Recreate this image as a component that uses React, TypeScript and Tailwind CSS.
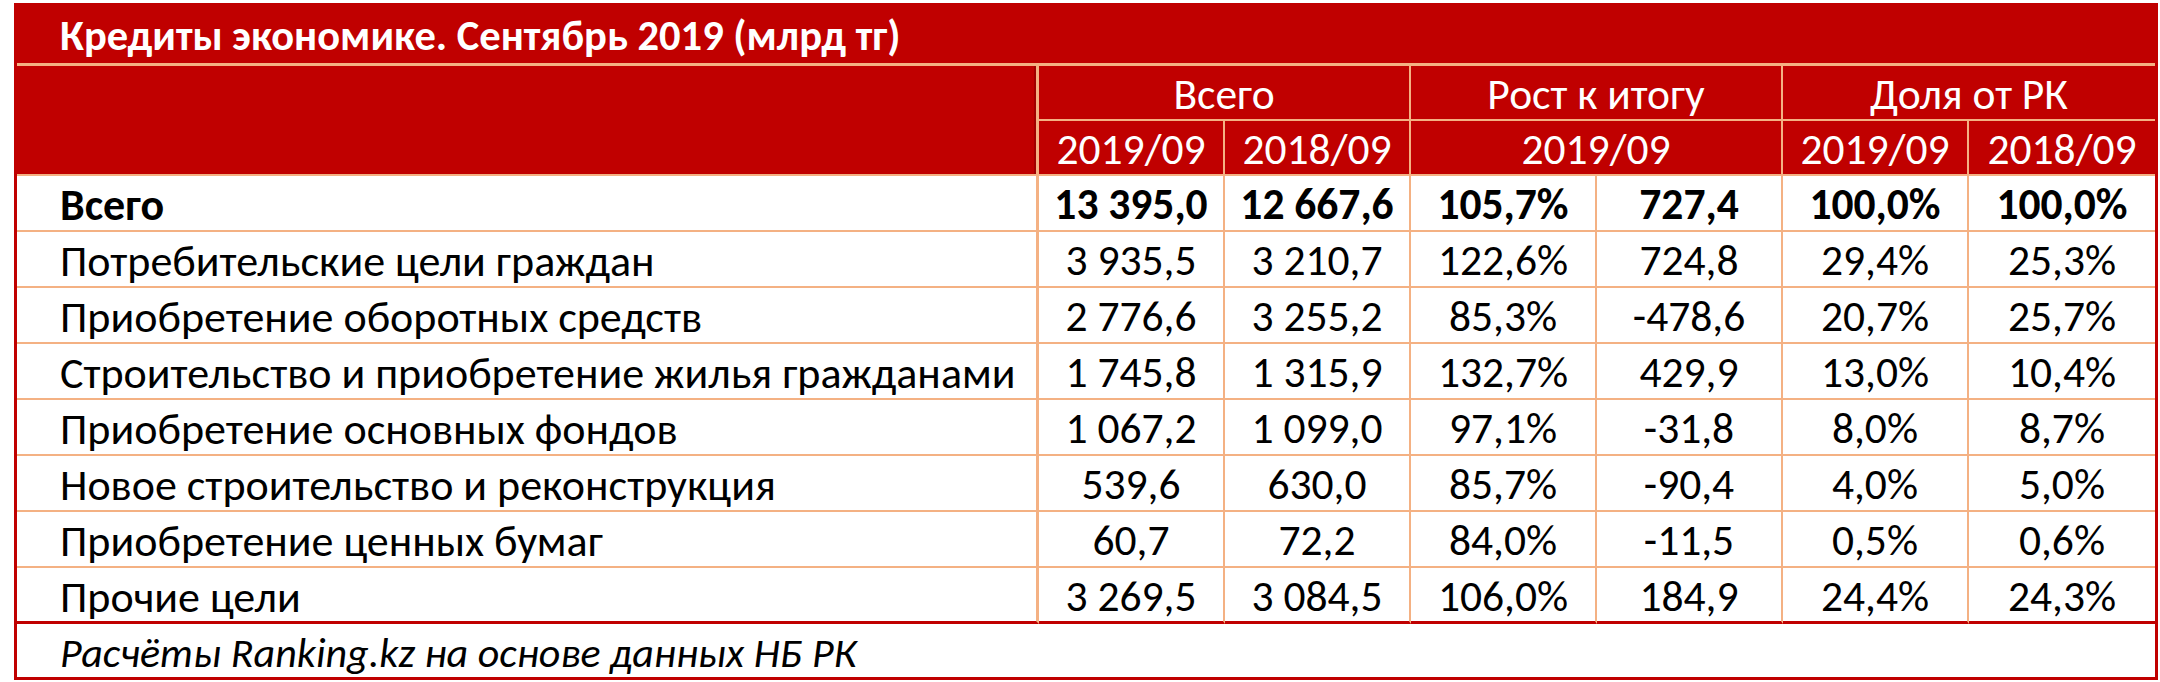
const rows: { label: string; values: string[]; bold?: boolean }[] = [
  { label: "Всего", values: ["13 395,0", "12 667,6", "105,7%", "727,4", "100,0%", "100,0%"], bold: true },
  { label: "Потребительские цели граждан", values: ["3 935,5", "3 210,7", "122,6%", "724,8", "29,4%", "25,3%"] },
  { label: "Приобретение оборотных средств", values: ["2 776,6", "3 255,2", "85,3%", "-478,6", "20,7%", "25,7%"] },
  { label: "Строительство и приобретение жилья гражданами", values: ["1 745,8", "1 315,9", "132,7%", "429,9", "13,0%", "10,4%"] },
  { label: "Приобретение основных фондов", values: ["1 067,2", "1 099,0", "97,1%", "-31,8", "8,0%", "8,7%"] },
  { label: "Новое строительство и реконструкция", values: ["539,6", "630,0", "85,7%", "-90,4", "4,0%", "5,0%"] },
  { label: "Приобретение ценных бумаг", values: ["60,7", "72,2", "84,0%", "-11,5", "0,5%", "0,6%"] },
  { label: "Прочие цели", values: ["3 269,5", "3 084,5", "106,0%", "184,9", "24,4%", "24,3%"] },
];

export default function App() {
  return (
    <div className="min-h-screen bg-white pt-[3px] pl-[14px]">
      <div
        className="w-[2144px] border-[3px] border-[#c00000] bg-white text-[43.5px] leading-none text-black"
        style={{ fontFamily: "Carlito, Calibri, 'Liberation Sans', sans-serif" }}
      >
        <div className="h-[60px] bg-[#c00000] border-b-[3px] border-[#f4b183] flex items-center pl-[43px] pt-[4px] text-[42.5px] font-bold text-white whitespace-nowrap">
          Кредиты экономике. Сентябрь 2019 (млрд тг)
        </div>

        <div className="grid grid-cols-[1022px_repeat(6,186px)] bg-[#c00000] text-white">
          <div className="row-span-2 border-r-[3px] border-b-[2px] border-r-[#f4b183] border-b-[#f4b183] shadow-[inset_-2px_0_0_#a00000]" />
          <div className="col-span-2 h-[55px] flex items-center justify-center pt-[4px] border-r-[2px] border-b-[2px] border-[#f4b183]">
            Всего
          </div>
          <div className="col-span-2 h-[55px] flex items-center justify-center pt-[4px] border-r-[2px] border-b-[2px] border-[#f4b183]">
            Рост к итогу
          </div>
          <div className="col-span-2 h-[55px] flex items-center justify-center pt-[4px] border-b-[2px] border-[#f4b183]">
            Доля от РК
          </div>
          <div className="h-[55px] flex items-center justify-center pt-[4px] border-r-[2px] border-b-[2px] border-[#f4b183]">
            2019/09
          </div>
          <div className="h-[55px] flex items-center justify-center pt-[4px] border-r-[2px] border-b-[2px] border-[#f4b183]">
            2018/09
          </div>
          <div className="col-span-2 h-[55px] flex items-center justify-center pt-[4px] border-r-[2px] border-b-[2px] border-[#f4b183]">
            2019/09
          </div>
          <div className="h-[55px] flex items-center justify-center pt-[4px] border-r-[2px] border-b-[2px] border-[#f4b183]">
            2019/09
          </div>
          <div className="h-[55px] flex items-center justify-center pt-[4px] border-b-[2px] border-[#f4b183]">
            2018/09
          </div>
        </div>

        <div className="grid grid-cols-[1022px_repeat(6,186px)] bg-white">
          {rows.map((row, i) => {
            const last = i === rows.length - 1;
            const bottom = last ? "border-b-[3px] border-b-[#c00000]" : "border-b-[2px] border-b-[#f4b183]";
            return [
              <div
                key={`l${i}`}
                className={`h-[56px] flex items-center pl-[43px] pt-[4px] text-[44px] whitespace-nowrap border-r-[3px] border-r-[#f4b183] ${bottom} ${row.bold ? "font-bold" : ""}`}
              >
                {row.label}
              </div>,
              ...row.values.map((v, j) => (
                <div
                  key={`v${i}-${j}`}
                  className={`h-[56px] flex items-center justify-center pt-[4px] whitespace-nowrap ${j < 5 ? "border-r-[2px] border-r-[#f4b183]" : ""} ${bottom} ${row.bold ? "font-bold" : ""}`}
                >
                  {v}
                </div>
              )),
            ];
          })}
        </div>

        <div className="h-[53px] flex items-center pl-[43px] pt-[4px] text-[42px] italic whitespace-nowrap">
          Расчёты Ranking.kz на основе данных НБ РК
        </div>
      </div>
    </div>
  );
}
